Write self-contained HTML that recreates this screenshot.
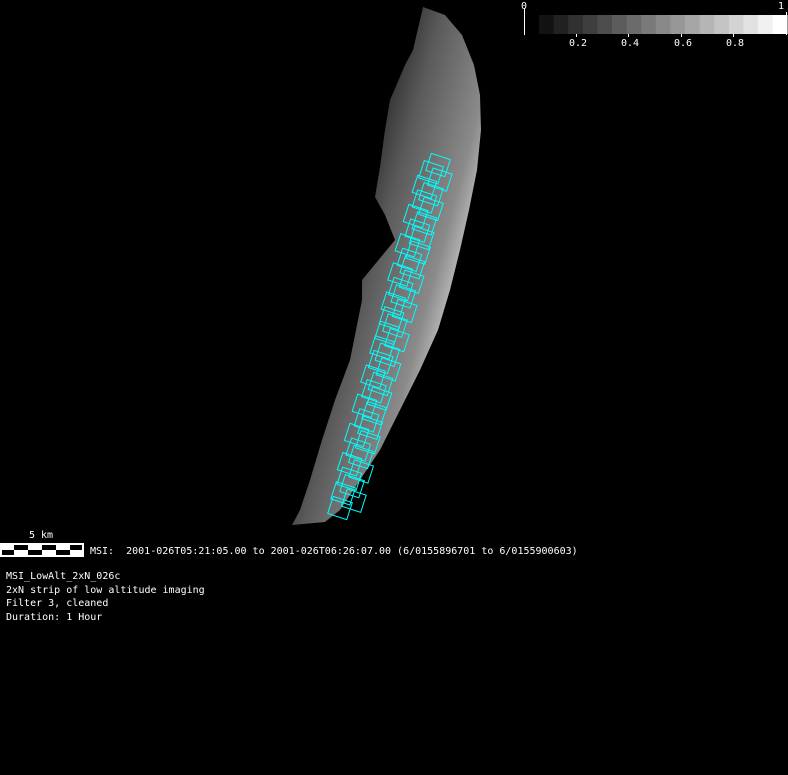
<!DOCTYPE html>
<html><head><meta charset="utf-8"><style>
body{margin:0;background:#000;width:788px;height:775px;overflow:hidden;position:relative;font-family:"DejaVu Sans Mono","Liberation Mono",monospace;color:#fff}
.t{position:absolute;font-size:10px;white-space:pre;line-height:13.5px}
</style></head><body>
<svg width="788" height="775" style="position:absolute;left:0;top:0">
<defs>
<linearGradient id="g" gradientUnits="userSpaceOnUse" x1="330" y1="250" x2="478" y2="290">
<stop offset="0" stop-color="#222"/><stop offset="0.3" stop-color="#5a5a5a"/><stop offset="0.7" stop-color="#8a8a8a"/><stop offset="0.92" stop-color="#d0d0d0"/><stop offset="1" stop-color="#eee"/>
</linearGradient>
</defs>
<polygon fill="url(#g)" points="423,7 445,15 462,35 474,65 480,95 481,130 477,170 469,210 460,250 450,290 438,330 420,370 400,410 380,450 360,480 340,510 325,522 292,525 300,510 310,480 322,440 335,400 350,360 362,300 362,280 395,240 385,215 375,197 380,167 385,130 390,100 405,65 413,50"/>
<g id="bx" fill="none" stroke="#00ffff" stroke-width="1"></g>
<g id="cb"></g>
<line x1="524.5" y1="8" x2="524.5" y2="35" stroke="#fff"/>
<line x1="786.5" y1="12" x2="786.5" y2="35" stroke="#fff"/>
<g stroke="#fff"><line x1="576.5" y1="34" x2="576.5" y2="37"/><line x1="628.5" y1="34" x2="628.5" y2="37"/><line x1="681.5" y1="34" x2="681.5" y2="37"/><line x1="733.5" y1="34" x2="733.5" y2="37"/></g>
<rect x="0" y="543" width="84" height="14" fill="#fff"/>
<g fill="#000"><rect x="14" y="545" width="14" height="5"/><rect x="42" y="545" width="14" height="5"/><rect x="70" y="545" width="12" height="5"/><rect x="2" y="550" width="12" height="5"/><rect x="28" y="550" width="14" height="5"/><rect x="56" y="550" width="14" height="5"/></g>
</svg>
<div class="t" style="left:521px;top:0px">0</div>
<div class="t" style="left:778px;top:0px">1</div>
<div class="t" style="left:569px;top:37px">0.2</div>
<div class="t" style="left:621px;top:37px">0.4</div>
<div class="t" style="left:674px;top:37px">0.6</div>
<div class="t" style="left:726px;top:37px">0.8</div>
<div class="t" style="left:29px;top:529px">5 km</div>
<div class="t" style="left:90px;top:545px">MSI:  2001-026T05:21:05.00 to 2001-026T06:26:07.00 (6/0155896701 to 6/0155900603)</div>
<div class="t" style="left:6px;top:570px">MSI_LowAlt_2xN_026c
2xN strip of low altitude imaging
Filter 3, cleaned
Duration: 1 Hour</div>
<script>
var cb=document.getElementById('cb'),s='';
for(var i=0;i<17;i++){var v=Math.round(18+i*(237/16));s+='<rect x="'+(539+i*14.6)+'" y="15" width="15" height="19" fill="rgb('+v+','+v+','+v+')"/>';}
cb.innerHTML=s;
var bx=document.getElementById('bx');s='';
for(var i=0;i<48;i++){var t=i/47;var cx=340+t*(432-340)+((i%2)?9:0)+Math.sin(i*1.7)*3;var cy=508-t*(508-165);
s+='<rect x="'+(cx-10)+'" y="'+(cy-9)+'" width="20" height="18" transform="rotate(18 '+cx+' '+cy+')"/>';}
bx.innerHTML=s;
</script>
</body></html>
